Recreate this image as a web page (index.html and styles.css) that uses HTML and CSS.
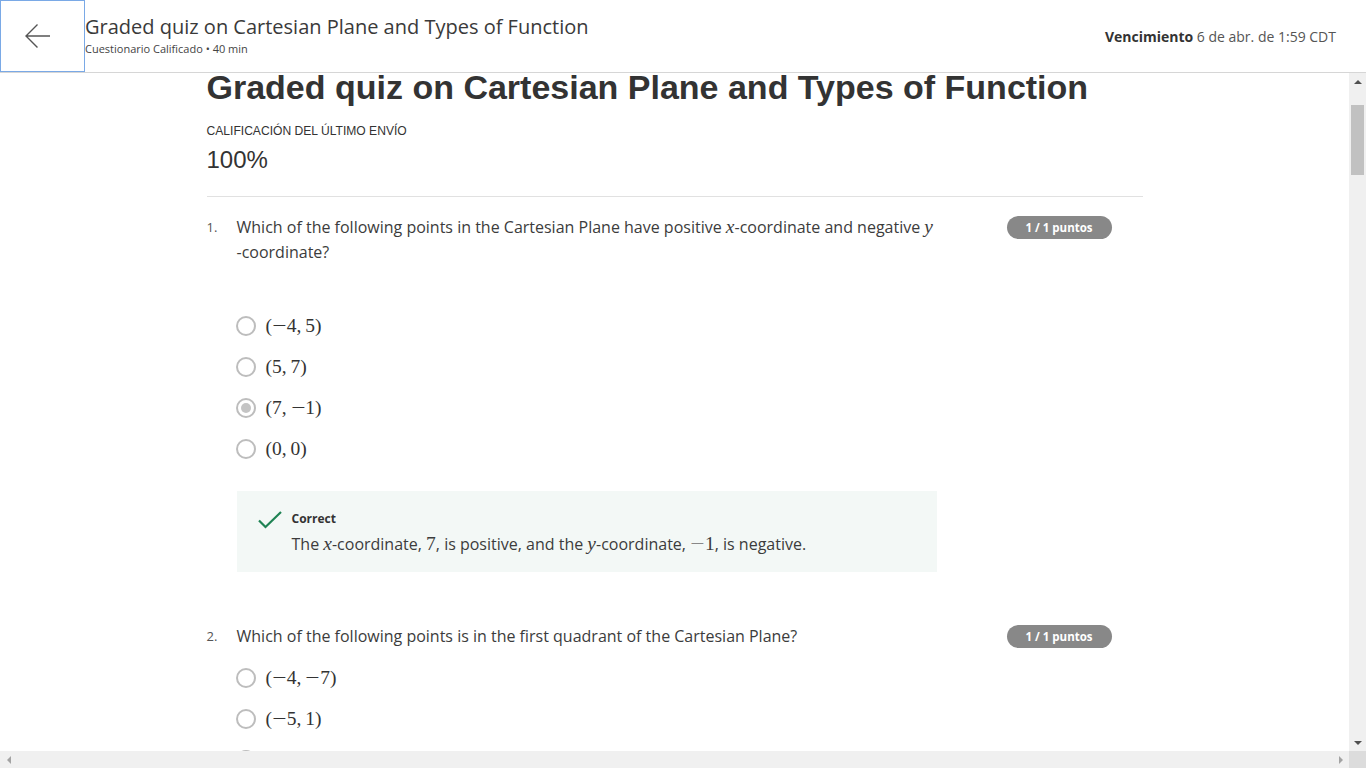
FILE: index.html
```html
<!DOCTYPE html>
<html lang="es">
<head>
<meta charset="utf-8">
<title>Graded quiz on Cartesian Plane and Types of Function</title>
<link rel="stylesheet" href="styles.css">
</head>
<body>
<header class="topbar">
  <button class="back" aria-label="Atrás">
    <svg width="26" height="24" viewBox="0 0 26 24"><path d="M1 12H25M12.5 0.5L1 12L12.5 23.5" fill="none" stroke="#555" stroke-width="1.4"/></svg>
  </button>
  <div class="titles">
    <div class="t-main">Graded quiz on Cartesian Plane and Types of Function</div>
    <div class="t-sub">Cuestionario Calificado • 40 min</div>
  </div>
  <div class="due"><b>Vencimiento</b> 6 de abr. de 1:59 CDT</div>
</header>
<div class="viewport">
  <div class="vrow">
    <main class="content">
      <div class="wrap">
        <h1>Graded quiz on Cartesian Plane and Types of Function</h1>
        <div class="grade-label">CALIFICACIÓN DEL ÚLTIMO ENVÍO</div>
        <div class="grade">100%</div>
        <div class="divider"></div>

        <section class="q">
          <div class="q-head">
            <div class="qnum">1.</div>
            <div class="qtext">Which of the following points in the Cartesian Plane have positive <span class="mi">x</span>-coordinate and negative <span class="mi">y</span><wbr><span class="nw">-coordinate?</span></div>
            <div class="badge">1 / 1 puntos</div>
          </div>
          <div class="opts opts-first">
            <div class="opt"><span class="radio"></span><span class="m">(<span class="mn">−</span>4,<span class="th"></span>5)</span></div>
            <div class="opt"><span class="radio"></span><span class="m">(5,<span class="th"></span>7)</span></div>
            <div class="opt"><span class="radio on"></span><span class="m">(7,<span class="th"></span><span class="mn">−</span>1)</span></div>
            <div class="opt"><span class="radio"></span><span class="m">(0,<span class="th"></span>0)</span></div>
          </div>
          <div class="feedback">
            <svg class="check" width="24" height="18" viewBox="0 0 24 18"><path d="M1 9.5L7.5 16L23 1" fill="none" stroke="#1f8354" stroke-width="2.2"/></svg>
            <div class="fb-body">
              <div class="fb-title">Correct</div>
              <div class="fb-text">The <span class="mi">x</span>-coordinate, <span class="m">7</span>, is positive, and the <span class="mi">y</span>-coordinate, <span class="m"><span class="mn muted">−</span>1</span>, is negative.</div>
            </div>
          </div>
        </section>

        <section class="q q2">
          <div class="q-head">
            <div class="qnum">2.</div>
            <div class="qtext">Which of the following points is in the first quadrant of the Cartesian Plane?</div>
            <div class="badge">1 / 1 puntos</div>
          </div>
          <div class="opts">
            <div class="opt"><span class="radio"></span><span class="m">(<span class="mn">−</span>4,<span class="th"></span><span class="mn">−</span>7)</span></div>
            <div class="opt"><span class="radio"></span><span class="m">(<span class="mn">−</span>5,<span class="th"></span>1)</span></div>
            <div class="opt"><span class="radio"></span><span class="m">(3,<span class="th"></span>2)</span></div>
            <div class="opt"><span class="radio"></span><span class="m">(<span class="mn">−</span>2,<span class="th"></span><span class="mn">−</span>6)</span></div>
          </div>
        </section>
      </div>
    </main>
    <div class="vscroll">
      <div class="sb-btn"><span class="tri-up"></span></div>
      <div class="vtrack"><div class="vthumb"></div></div>
      <div class="sb-btn"><span class="tri-down"></span></div>
    </div>
  </div>
  <div class="hscroll">
    <div class="htrack">
      <div class="sb-btn"><span class="tri-left"></span></div>
      <div class="sb-btn"><span class="tri-right"></span></div>
    </div>
    <div class="corner"></div>
  </div>
</div>
</body>
</html>
```

FILE: styles.css
```css
* { box-sizing: border-box; }
html, body { margin: 0; padding: 0; }
body {
  width: 1366px;
  height: 768px;
  overflow: hidden;
  display: flex;
  flex-direction: column;
  background: #fff;
  color: #333;
  font-family: "Open Sans", "Noto Sans", sans-serif;
}

/* header */
.topbar {
  flex: none;
  height: 73px;
  display: flex;
  border-bottom: 1px solid #d6d6d6;
}
.back {
  flex: none;
  width: 85px;
  height: 72px;
  margin: 0;
  padding: 0 9px 0 0;
  border: 1px solid #7aa9e6;
  background: #fff;
  display: flex;
  align-items: center;
  justify-content: center;
}
.titles { padding-top: 13px; }
.t-main { font-size: 20px; line-height: 28px; color: #3a3a3a; }
.t-sub { font-size: 11px; line-height: 15px; color: #444; }
.due {
  margin-left: auto;
  align-self: center;
  padding-right: 30px;
  font-size: 14px;
  color: #555;
}
.due b { color: #333; font-weight: 700; }

/* scroll area */
.viewport { flex: 1; min-height: 0; display: flex; flex-direction: column; }
.vrow { flex: 1; min-height: 0; display: flex; }
.content { flex: 1; overflow: hidden; }
.wrap { width: 936px; margin: 0 auto; }

h1 {
  margin: -3px 0 0;
  font-family: "Liberation Sans", Arial, sans-serif;
  font-weight: 700;
  font-size: 34px;
  line-height: 34px;
  color: #333;
}
.grade-label {
  margin-top: 19px;
  font-family: "Liberation Sans", Arial, sans-serif;
  font-size: 12.1px;
  line-height: 16px;
  color: #333;
}
.grade {
  margin-top: 7px;
  font-family: "Liberation Sans", Arial, sans-serif;
  font-size: 24px;
  line-height: 28px;
  color: #333;
}
.divider { margin-top: 22px; height: 1px; background: #e1e1e1; }

/* questions */
.q { margin-top: 18px; }
.q2 { margin-top: 52px; }
.q-head { display: flex; align-items: flex-start; }
.qnum { flex: none; width: 30px; font-size: 13px; line-height: 25px; color: #555; }
.qtext { width: 730px; font-size: 16px; line-height: 25px; color: #3c3c3c; }
.nw { white-space: nowrap; }
.badge {
  margin-left: auto;
  margin-right: 31px;
  margin-top: 1px;
  width: 105px;
  height: 23px;
  border-radius: 12px;
  background: #888;
  color: #fff;
  font-size: 11.5px;
  font-weight: 700;
  line-height: 23px;
  text-align: center;
}

.m, .mi {
  font-family: "Liberation Serif", "DejaVu Serif", serif;
  font-size: 1.22em;
  line-height: 1;
}
.mi { font-style: italic; }
.mn { display: inline-block; width: 0.76em; text-align: center; transform: scaleX(1.3); }
.th { display: inline-block; width: 0.2em; }
.muted { color: #888; }

.opts { margin-top: 8px; padding-left: 29px; }
.opts-first { margin-top: 40px; }
.opt { height: 41px; display: flex; align-items: center; gap: 10px; }
.opt .m { font-size: 19.5px; color: #333; }
.radio {
  flex: none;
  width: 20px;
  height: 20px;
  border-radius: 50%;
  border: 2px solid #bdbdbd;
  background: #fff;
  display: flex;
  align-items: center;
  justify-content: center;
}
.radio.on::after {
  content: "";
  width: 10px;
  height: 10px;
  border-radius: 50%;
  background: #c4c4c4;
}

.feedback {
  margin: 22px 0 0 30px;
  width: 700px;
  height: 81px;
  background: #f3f8f6;
  display: flex;
  padding: 19px 0 0 21px;
  gap: 10px;
}
.check { flex: none; margin-top: 1px; }
.fb-title { font-size: 12px; font-weight: 700; line-height: 18px; color: #333; }
.fb-text { margin-top: 4px; font-size: 16px; line-height: 25px; color: #3c3c3c; }

/* scrollbars */
.vscroll {
  flex: none;
  width: 17px;
  background: #f0f0f0;
  display: flex;
  flex-direction: column;
}
.sb-btn { flex: none; width: 17px; height: 17px; display: flex; align-items: center; justify-content: center; }
.vtrack { flex: 1; padding: 15px 2px 0 2px; }
.vthumb { height: 70px; background: #c1c1c1; }
.tri-up { width: 0; height: 0; border-left: 4px solid transparent; border-right: 4px solid transparent; border-bottom: 4px solid #505050; }
.tri-down { width: 0; height: 0; border-left: 4px solid transparent; border-right: 4px solid transparent; border-top: 4px solid #505050; }
.hscroll { flex: none; height: 17px; display: flex; }
.htrack { flex: 1; background: #f0f0f0; display: flex; justify-content: space-between; }
.tri-left { width: 0; height: 0; border-top: 4px solid transparent; border-bottom: 4px solid transparent; border-right: 4px solid #a3a3a3; }
.tri-right { width: 0; height: 0; border-top: 4px solid transparent; border-bottom: 4px solid transparent; border-left: 4px solid #a3a3a3; }
.corner { flex: none; width: 17px; background: #dcdcdc; }
```
